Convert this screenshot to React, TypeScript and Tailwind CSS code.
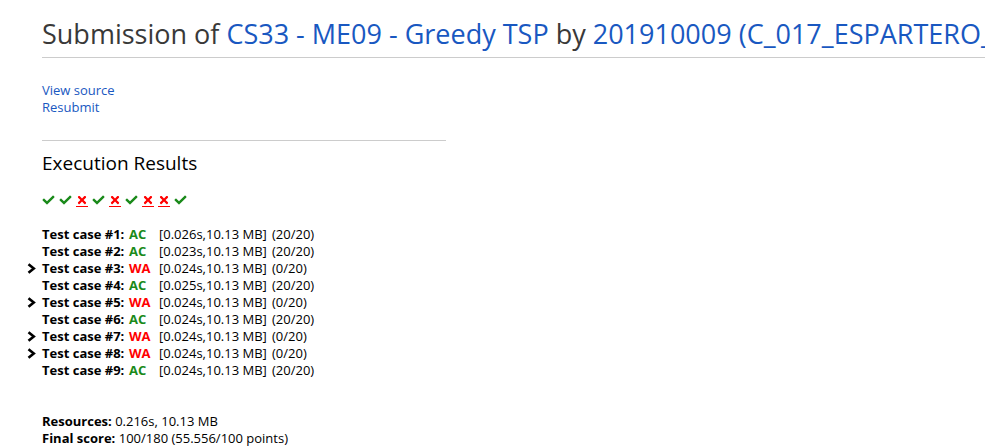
import React from 'react';
import { FaCheck, FaTimes } from 'react-icons/fa';

type Case = { id: number; status: 'AC' | 'WA'; time: string; points: string };

const cases: Case[] = [
  { id: 1, status: 'AC', time: '0.026s', points: '(20/20)' },
  { id: 2, status: 'AC', time: '0.023s', points: '(20/20)' },
  { id: 3, status: 'WA', time: '0.024s', points: '(0/20)' },
  { id: 4, status: 'AC', time: '0.025s', points: '(20/20)' },
  { id: 5, status: 'WA', time: '0.024s', points: '(0/20)' },
  { id: 6, status: 'AC', time: '0.024s', points: '(20/20)' },
  { id: 7, status: 'WA', time: '0.024s', points: '(0/20)' },
  { id: 8, status: 'WA', time: '0.024s', points: '(0/20)' },
  { id: 9, status: 'AC', time: '0.024s', points: '(20/20)' },
];

const Chevron = () => (
  <svg width="9" height="11" viewBox="0 0 9 11" className="text-black">
    <path d="M1.5 1.2 L6.8 5.5 L1.5 9.8" fill="none" stroke="currentColor" strokeWidth="2.6" strokeLinejoin="miter" />
  </svg>
);

const App: React.FC = () => {
  return (
    <div className="min-h-screen bg-white text-black overflow-hidden font-['Open_Sans',sans-serif] text-[13px]">
      <div className="pl-[42px]">
        {/* title */}
        <h2 className="whitespace-nowrap overflow-hidden pt-[16px] pb-[5px] text-[27px] leading-[36px] text-[#393939] border-b border-[#ccc]">
          Submission of <a className="text-[#1958c1]">CS33 - ME09 - Greedy TSP</a> by{' '}
          <a className="text-[#1958c1]">201910009 (C_017_ESPARTERO_JULIAN_PAUL)</a>
        </h2>

        <div className="mt-[24px] leading-[17px] text-[#1958c1]">
          <div>View source</div>
          <div>Resubmit</div>
        </div>

        <div className="w-[404px] mt-[24px] border-t border-[#ccc]" />

        <h3 className="mt-[9px] text-[19px] leading-[26px] text-black">Execution Results</h3>

        {/* case icons */}
        <div className="mt-[16px] flex items-center gap-[3.5px] h-[16px]">
          {cases.map((c) =>
            c.status === 'AC' ? (
              <FaCheck key={c.id} className="w-[13px] h-[12px] text-[#1a8a1a]" />
            ) : (
              <span key={c.id} className="w-[13px] flex flex-col items-center">
                <FaTimes className="w-[12px] h-[12px] text-[#f00]" />
                <span className="w-[12px] h-[1px] bg-[#f00]" />
              </span>
            )
          )}
        </div>

        {/* test cases */}
        <div className="mt-[18px] leading-[17px]">
          {cases.map((c) => (
            <div key={c.id} className="flex items-center -ml-[15px]">
              <span className="w-[15px] flex items-center">{c.status === 'WA' && <Chevron />}</span>
              <span className="w-[87px] font-bold">Test case #{c.id}:</span>
              <span className={`w-[30px] font-bold ${c.status === 'AC' ? 'text-[#1a8a1a]' : 'text-[#f00]'}`}>{c.status}</span>
              <span className="w-[113px]">[{c.time},10.13 MB]</span>
              <span>{c.points}</span>
            </div>
          ))}
        </div>

        <div className="mt-[34px] leading-[17px]">
          <div>
            <b>Resources:</b> 0.216s, 10.13 MB
          </div>
          <div>
            <b>Final score:</b> 100/180 (55.556/100 points)
          </div>
        </div>
      </div>
    </div>
  );
};

export default App;
